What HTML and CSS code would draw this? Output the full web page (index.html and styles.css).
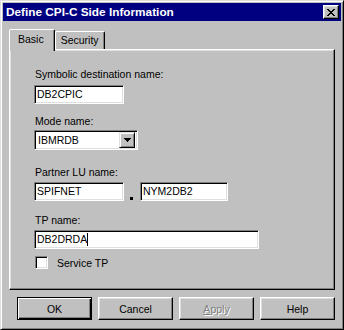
FILE: index.html
```html
<!DOCTYPE html>
<html lang="en">
  <head>
    <meta charset="UTF-8" />
    <meta name="viewport" content="width=device-width, initial-scale=1.0" />
    <title>Define CPI-C Side Information</title>
    <link rel="stylesheet" href="styles.css">
  </head>
  <body>
    <div class="window">
      <div class="titlebar">
        <span class="title">Define CPI-C Side Information</span>
        <span class="closeBtn">
          <svg width="8" height="7" viewBox="0 0 8 7">
            <path d="M0 0h2v1h1v1h2v-1h1v-1h2v1h-1v1h-1v1h-1v1h1v1h1v1h1v1h-2v-1h-1v-1h-2v1h-1v1h-2v-1h1v-1h1v-1h1v-1h-1v-1h-1v-1h-1z" fill="#000"/>
          </svg>
        </span>
      </div>

      <div class="content">
        <div class="tabs">
          <div class="tab active">Basic</div>
          <div class="tab">Security</div>
        </div>

        <div class="panel">
          <label class="label">Symbolic destination name:</label>
          <div class="field w90">DB2CPIC</div>

          <label class="label gap1">Mode name:</label>
          <div class="combo">
            <span class="comboText">IBMRDB</span>
            <span class="dropBtn">
              <svg width="7" height="4" viewBox="0 0 7 4">
                <path d="M0 0h7v1h-1v1h-1v1h-1v1h-1v-1h-1v-1h-1v-1h-1z" fill="#000"/>
              </svg>
            </span>
          </div>

          <label class="label gap2">Partner LU name:</label>
          <div class="luRow">
            <div class="field w90">SPIFNET</div>
            <span class="dot"></span>
            <div class="field w88">NYM2DB2</div>
          </div>

          <label class="label gap3">TP name:</label>
          <div class="field w225">DB2DRDA<span class="caret"></span></div>

          <div class="checkRow">
            <span class="checkbox"></span>
            <span>Service TP</span>
          </div>
        </div>

        <div class="buttons">
          <div class="btn default">OK</div>
          <div class="btn">Cancel</div>
          <div class="btn disabled"><u>A</u>pply</div>
          <div class="btn">Help</div>
        </div>
      </div>
    </div>
  </body>
</html>
```

FILE: styles.css
```css
body {
  margin: 0;
  background: #c0c0c0;
  font-family: "Liberation Sans", Arial, sans-serif;
  font-size: 10.5px;
  color: #000;
}
.window {
  width: 344px;
  height: 330px;
  box-sizing: border-box;
  background: #c0c0c0;
  border: 1px solid;
  border-color: #dfdfdf #000 #000 #dfdfdf;
  box-shadow: inset 1px 1px #fff, inset -1px -1px #808080;
  padding: 2px;
  display: flex;
  flex-direction: column;
}
.titlebar {
  height: 18px;
  background: #000080;
  color: #fff;
  display: flex;
  align-items: center;
  justify-content: space-between;
  padding-left: 3px;
}
.title {
  font-weight: bold;
  font-size: 11.8px;
}
.closeBtn {
  width: 16px;
  height: 14px;
  box-sizing: border-box;
  margin-right: 2px;
  background: #c0c0c0;
  border: 1px solid;
  border-color: #fff #000 #000 #fff;
  box-shadow: inset -1px -1px #808080, inset 1px 1px #dfdfdf;
  display: flex;
  align-items: center;
  justify-content: center;
}
.content {
  flex: 1;
  display: flex;
  flex-direction: column;
  padding: 8px 6px 7px;
}
.tabs {
  display: flex;
  align-items: flex-end;
  height: 20px;
}
.tab {
  height: 18px;
  box-sizing: border-box;
  padding: 2px 5px 0 5px;
  border: 1px solid;
  border-bottom: none;
  border-color: #fff #000 transparent #fff;
  box-shadow: inset -1px 0 #808080;
  border-radius: 2px 2px 0 0;
}
.tab.active {
  position: relative;
  height: 22px;
  margin-bottom: -2px;
  padding: 3px 10px 0 8px;
  background: #c0c0c0;
  z-index: 1;
}
.panel {
  flex: 1;
  display: flex;
  flex-direction: column;
  align-items: flex-start;
  padding: 18px 0 0 24px;
  border: 1px solid;
  border-color: #fff #000 #000 #fff;
  box-shadow: inset -1px -1px #808080, inset 1px 1px #dfdfdf;
}
.label {
  display: block;
  height: 13px;
  line-height: 13px;
  padding-left: 1px;
  margin-bottom: 4px;
}
.gap1 {
  margin-top: 11px;
  margin-bottom: 2px;
}
.gap2 {
  margin-top: 16px;
  margin-bottom: 3px;
}
.gap3 {
  margin-top: 13px;
  margin-bottom: 3px;
}
.field {
  height: 19px;
  box-sizing: border-box;
  background: #fff;
  border: 1px solid;
  border-color: #808080 #fff #fff #808080;
  box-shadow: inset 1px 1px #000, inset -1px -1px #dfdfdf;
  padding: 0 2px;
  line-height: 17px;
  display: flex;
  align-items: center;
}
.w90 { width: 90px; }
.w88 { width: 88px; }
.w225 { width: 225px; }
.caret {
  width: 1px;
  height: 13px;
  background: #000;
}
.combo {
  width: 104px;
  height: 20px;
  box-sizing: border-box;
  background: #fff;
  border: 1px solid;
  border-color: #808080 #fff #fff #808080;
  box-shadow: inset 1px 1px #000, inset -1px -1px #dfdfdf;
  padding: 2px 2px 2px 3px;
  display: flex;
  align-items: center;
  justify-content: space-between;
}
.dropBtn {
  width: 16px;
  height: 16px;
  box-sizing: border-box;
  background: #c0c0c0;
  border: 1px solid;
  border-color: #dfdfdf #000 #000 #dfdfdf;
  box-shadow: inset 1px 1px #fff, inset -1px -1px #808080;
  display: flex;
  align-items: center;
  justify-content: center;
}
.luRow {
  display: flex;
  align-items: flex-end;
}
.dot {
  width: 3px;
  height: 3px;
  background: #000;
  margin: 0 7px 1px 6px;
}
.checkRow {
  display: flex;
  align-items: center;
  gap: 9px;
  margin-top: 7px;
  padding-left: 1px;
}
.checkbox {
  width: 13px;
  height: 13px;
  box-sizing: border-box;
  background: #fff;
  border: 1px solid;
  border-color: #808080 #fff #fff #808080;
  box-shadow: inset 1px 1px #000, inset -1px -1px #dfdfdf;
}
.buttons {
  display: flex;
  justify-content: flex-end;
  gap: 6px;
  margin-top: 7px;
}
.btn {
  width: 75px;
  height: 23px;
  box-sizing: border-box;
  border: 1px solid;
  border-color: #fff #000 #000 #fff;
  box-shadow: inset -1px -1px #808080, inset 1px 1px #dfdfdf;
  display: flex;
  align-items: center;
  justify-content: center;
}
.btn.default {
  border: 1px solid #000;
  box-shadow: inset 1px 1px #fff, inset -1px -1px #000, inset -2px -2px #808080;
}
.btn.disabled {
  color: #808080;
  text-shadow: 1px 1px #fff;
}
```
